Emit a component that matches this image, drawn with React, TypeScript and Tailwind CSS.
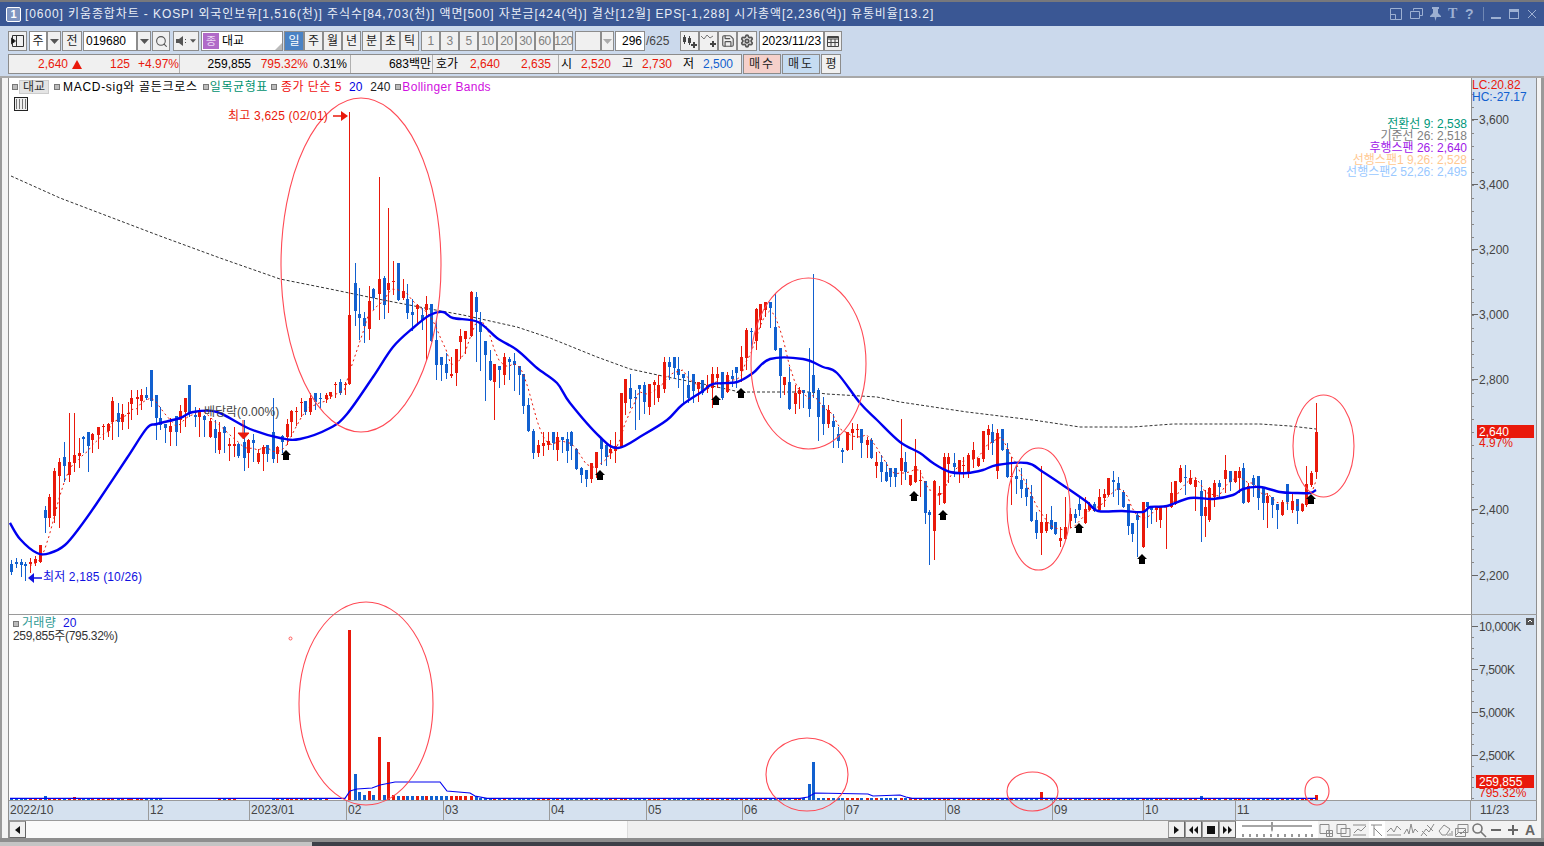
import React from 'react';
import { Search, Settings, Save } from 'lucide-react';

// x, wick top, body top, body bottom, wick bottom, 1 = up (red) / 0 = down (blue)
const candles: number[][] = [
  [11,560,564,572,575,0],[15.5,558,562,564,568,0],[20.5,559,562,565,577,0],[25,562,564,566,581,0],[30,558,562,564,573,1],[35,556,559,563,566,1],[40,545,545,562,563,1],
  [44.5,506,510,518,533,0],[49,494,497,518,527,1],[54,468,471,516,523,1],[59,458,462,476,528,1],[64,442,457,466,482,0],[68.5,413,462,475,482,1],[73.5,413,455,463,472,1],[78.5,438,453,456,468,1],
  [83,436,437,439,453,0],[88,432,432,446,472,0],[92,433,434,440,453,1],[98,427,427,435,449,1],[103,424,426,427,440,1],[108,423,424,431,437,1],[112,397,401,422,440,1],[117.5,403,413,422,437,0],
  [122,404,414,422,430,1],[127.5,402,413,414,429,1],[131,390,398,404,420,1],[136.5,390,397,399,415,1],[141,389,395,401,410,1],[146,387,395,398,400,0],[151,370,370,401,407,0],[156,395,395,418,440,0],
  [160,407,418,425,430,0],[165,424,424,428,443,0],[170,418,426,432,446,1],[175.5,416,416,432,446,0],[180,405,411,420,433,1],[185,398,398,412,427,1],[189,385,385,413,417,0],[194.5,407,415,417,427,0],
  [199,408,411,417,437,1],[204,415,416,420,437,0],[209.5,418,421,437,438,1],[214.5,420,429,438,453,0],[218.5,422,432,450,454,1],[223.5,426,427,433,453,0],[228.5,438,444,446,461,1],[233.5,427,444,446,457,1],
  [238,443,444,456,458,0],[243.5,420,442,458,471,0],[248,439,440,453,468,1],[252.5,434,440,443,462,0],[258,449,453,462,464,1],[262.5,445,447,454,471,1],[267,445,445,454,462,0],[272.5,398,432,459,463,0],
  [277,446,447,454,463,1],[282,435,436,442,453,0],[286.5,419,424,437,445,1],[291,410,411,422,437,1],[296,407,411,412,426,1],[301,398,402,403,417,1],[305,401,401,412,415,0],[310,393,398,412,415,1],
  [315,393,393,402,410,0],[320,393,398,399,408,0],[325.5,393,395,399,403,1],[330,392,392,396,399,1],[335,382,384,385,398,1],[340,379,382,393,395,0],[344.5,382,384,385,395,1],
  [349,112,315,384,385,1],[354.5,263,283,311,326,0],[359,288,314,318,340,0],[363.5,312,318,326,343,0],[368.5,286,301,329,340,1],[373,288,289,298,310,0],[378.5,177,279,294,320,1],[383.5,276,278,305,319,0],
  [388,208,283,290,313,1],[392.5,261,281,282,295,1],[397.5,263,263,300,301,0],[402.5,279,291,298,300,1],[407,284,299,313,319,0],[412,299,312,315,331,0],[417,304,305,309,324,1],[421.5,308,315,320,330,0],
  [426,296,304,310,361,1],[431,304,304,341,342,0],[436,320,340,365,380,0],[441,357,357,365,381,0],[446,353,364,373,379,0],[450.5,357,374,376,378,1],[455.5,349,349,373,386,1],[460,329,336,342,359,1],[465,331,331,339,354,1],
  [470.5,291,292,336,337,1],[475.5,292,297,312,362,0],[480,312,322,332,371,0],[485,341,341,355,401,0],[489.5,350,361,380,381,0],[494,364,364,382,420,1],[499,366,366,370,388,0],[504,353,357,375,385,1],[508.5,357,359,362,380,0],
  [513.5,353,361,365,391,0],[518.5,366,366,375,395,0],[523,374,374,406,414,0],[528,398,405,431,432,0],[533,429,431,453,459,0],[537.5,440,445,453,457,1],[542.5,432,443,446,456,1],[547.5,432,441,445,450,1],[552.5,432,432,443,450,0],
  [557,432,437,450,461,1],[561.5,437,437,440,453,0],[566.5,432,439,451,463,0],[571,431,432,446,460,0],[576,448,449,469,470,0],[581,467,468,475,483,0],[586,470,470,479,487,0],[591,463,463,479,483,1],[595.5,452,452,468,478,1],
  [600.5,439,439,449,465,0],[605.5,444,445,457,466,0],[610,440,449,453,459,1],[615,432,446,451,463,1],[620.5,393,393,447,448,1],[624.5,379,379,403,415,1],[629.5,374,388,399,408,0],[634.5,390,397,398,430,0],[639,385,385,389,420,0],
  [644,382,385,402,414,0],[649,384,384,407,415,1],[653.5,380,382,385,405,1],[658,375,385,398,402,1],[663.5,357,362,389,393,1],[668.5,357,362,367,380,0],[673.5,357,357,368,379,0],[678,357,369,375,388,0],[683,374,374,378,403,0],
  [687.5,371,385,398,403,0],[692.5,374,374,391,403,0],[697.5,382,382,389,402,1],[702,380,380,393,395,0],[707,375,385,389,393,1],[711.5,367,374,388,408,1],[716.5,367,374,378,388,1],[721.5,372,372,398,400,0],[726.5,372,375,392,393,1],
  [731.5,370,376,379,387,0],[736,367,367,373,388,0],[741,346,357,371,382,1],[745.5,328,330,358,370,1],[750.5,328,331,332,350,0],[755.5,308,309,341,350,1],[760,304,304,320,328,1],[765,302,302,310,317,1],[769.5,302,302,308,328,0],
  [774.5,294,327,350,351,0],[779.5,348,348,376,398,0],[784,377,377,385,395,1],[789,367,382,409,410,0],[794.5,385,393,404,414,1],[798.5,387,390,394,409,1],[803,390,390,393,408,0],[808.5,348,392,409,417,0],[813,274,375,392,398,0],
  [818,388,390,417,441,0],[823,397,405,424,435,0],[827.5,405,410,424,428,1],[832.5,414,421,427,448,0],[837.5,427,434,441,448,0],[842,448,450,452,463,0],[847,432,432,450,451,1],[852,423,429,433,450,1],[856.5,424,429,430,438,1],
  [861,429,429,443,458,0],[866.5,437,440,445,458,1],[871,438,440,458,459,0],[876,452,462,466,478,1],[881,455,462,472,482,0],[886,462,472,481,482,0],[890,468,468,477,487,0],[895,468,468,477,487,0],[900.5,419,458,471,485,1],
  [905,452,462,472,480,0],[910,475,475,485,486,1],[914.5,439,466,482,483,1],[919.5,470,480,481,497,1],[924.5,481,481,513,524,0],[929,510,512,515,565,0],[934,480,481,531,560,1],[939,486,493,495,505,1],[943.5,453,457,503,504,1],
  [948,453,457,464,483,1],[953.5,453,463,467,477,0],[958.5,460,460,473,483,1],[963,457,465,466,478,1],[968,453,455,473,478,1],[972.5,442,450,459,468,1],[977.5,458,458,466,467,1],[982.5,431,431,459,462,1],[987.5,425,429,435,450,1],
  [992,424,432,443,455,0],[997,429,433,471,479,1],[1001.5,429,429,450,451,0],[1006.5,443,449,477,478,0],[1011,457,476,477,505,1],[1016,465,476,479,494,0],[1021,468,480,489,498,0],[1026,479,488,497,506,0],[1030.5,485,496,521,522,0],
  [1035.5,512,520,533,539,0],[1040.5,466,522,533,555,1],[1045.5,514,522,531,533,1],[1050.5,506,520,529,530,0],[1055,522,522,534,535,0],[1059.5,527,538,541,547,1],[1064.5,497,527,539,540,1],[1069.5,508,514,521,528,1],[1074.5,509,514,518,523,0],
  [1079,498,504,510,516,0],[1084.5,497,509,523,524,1],[1088.5,502,504,510,511,1],[1093.5,502,504,511,512,0],[1098.5,489,497,510,511,1],[1103.5,489,494,498,507,1],[1108,478,478,495,496,1],[1113,471,480,482,497,0],[1117.5,477,483,490,505,0],
  [1122.5,490,492,507,508,0],[1127.5,504,504,526,535,0],[1132,523,523,534,542,0],[1137,512,515,520,557,0],[1142.5,502,502,547,548,1],[1146.5,502,502,507,528,0],[1151,507,507,510,524,0],[1155.5,507,507,510,522,1],[1160,507,507,520,528,1],
  [1166,505,505,507,549,1],[1171,482,493,507,508,1],[1175,481,481,504,505,1],[1179.5,465,468,482,483,1],[1184.5,465,477,478,495,0],[1190,470,478,484,485,1],[1195,478,480,487,511,1],[1200.5,480,491,516,542,0],[1205,490,507,516,537,1],
  [1209,487,488,520,522,1],[1214,480,483,497,507,1],[1219,480,483,487,498,0],[1224.5,455,470,479,493,1],[1229.5,471,471,482,491,0],[1234.5,471,471,482,483,1],[1239,467,471,478,493,1],[1243,463,468,503,504,0],[1248,483,486,502,503,1],
  [1253,475,478,485,497,0],[1258,476,476,498,510,0],[1263,488,488,503,520,0],[1267,493,496,503,528,1],[1272,497,497,505,518,0],[1277,504,504,510,529,0],[1282,500,502,515,516,1],[1287,484,484,502,510,0],[1292,493,501,510,513,1],
  [1297,499,499,511,524,0],[1302,504,504,511,512,1],[1306,466,484,505,507,1],[1311,471,473,485,487,1],[1316,403,432,472,479,1],
];

const ma20: number[][] = [[10,523],[20,539],[37,553],[50,553],[65,545],[80,527],[97,503],[127,458],[147,428],[157,424],[180,418],[193,412],[217,412],[250,429],[280,438],[300,439],[330,428],[347,414],[373,377],[393,347],[413,328],[430,315],[443,312],[453,318],[478,322],[497,338],[517,350],[537,368],[557,383],[570,403],[600,437],[618,448],[643,435],[667,420],[682,405],[703,391],[713,384],[737,382],[753,373],[770,359],[803,359],[823,367],[837,373],[860,403],[877,420],[900,442],[920,453],[933,463],[950,472],[967,473],[983,470],[997,465],[1027,463],[1043,472],[1067,488],[1087,502],[1098,511],[1122,511],[1143,512],[1150,507],[1167,506],[1190,498],[1213,499],[1233,495],[1243,489],[1260,487],[1280,492],[1295,493],[1310,493],[1316,490]];
const ma240: number[][] = [[11,176],[60,198],[110,217],[160,236],[220,258],[280,279],[330,289],[383,300],[430,309],[463,315],[517,327],[550,338],[597,357],[630,369],[667,377],[703,384],[740,392],[810,392],[827,394],[877,397],[900,402],[967,412],[1033,420],[1080,427],[1133,427],[1173,424],[1260,424],[1290,426],[1316,429]];
const volMa: number[][] = [[10,798.3],[345,798.3],[350,791],[357,789],[372,788],[380,785],[395,782],[440,782],[447,791],[470,793],[475,796],[487,798.3],[800,798.3],[808,797],[815,793],[868,794],[873,796],[900,795],[906,797],[912,798.3],[1316,798.3]];
const volTops: Record<number, number> = { 44.5:796,73.5:797,349:630,354.5:774,359:792,363.5:795,368.5:791,373:795,378.5:737,383.5:795,388:762,392.5:795,397.5:796,808.5:784,813:762,1040.5:792,1200.5:796,1316:795 };

const RED = '#e9190b';
const BLUE = '#1160cf';
const pts = (a: number[][]) => a.map((p) => p.join(',')).join(' ');

// moving averages in the picture run smooth, so go through the read-off points with a spline
const smooth = (a: number[][]) => {
  let d = `M${a[0][0]} ${a[0][1]}`;
  for (let i = 0; i < a.length - 1; i++) {
    const p0 = a[i - 1] ?? a[i];
    const p1 = a[i];
    const p2 = a[i + 1];
    const p3 = a[i + 2] ?? p2;
    const c1x = p1[0] + (p2[0] - p0[0]) / 6;
    const c1y = p1[1] + (p2[1] - p0[1]) / 6;
    const c2x = p2[0] - (p3[0] - p1[0]) / 6;
    const c2y = p2[1] - (p3[1] - p1[1]) / 6;
    d += `C${c1x} ${c1y} ${c2x} ${c2y} ${p2[0]} ${p2[1]}`;
  }
  return d;
};

const ma5 = candles.map((c, i) => {
  if (i < 4) return null;
  let s = 0;
  for (let k = i - 4; k <= i; k++) s += candles[k][5] ? candles[k][2] : candles[k][3];
  return [c[0], s / 5];
}).filter(Boolean) as number[][];

// stretches where only the average line shows under the volume bars
const noVolume = (x: number) => (x > 163 && x < 215) || (x > 236 && x < 270) || (x > 327 && x < 347);

const upArrows = [[286,450],[600,470],[716,395],[741,388],[914,491],[943,510],[1079,523],[1142,554],[1311,494]];
const priceTicks = [[3600,120],[3400,185],[3200,250],[3000,315],[2800,380],[2400,510],[2200,576]];
const volTicks = [['10,000K',627],['7,500K',670],['5,000K',713],['2,500K',756]] as [string, number][];

const Btn = ({ className = '', bg = 'bg-[#f0f0f0]', children }: { className?: string; bg?: string; children?: React.ReactNode }) => (
  <div className={`h-5 shrink-0 border border-[#8c8c8c] flex items-center justify-center text-[12px] text-[#222] ${bg} ${className}`}>{children}</div>
);
const Caret = ({ color = '#555' }: { color?: string }) => (
  <svg width="9" height="5" viewBox="0 0 9 5"><path d="M0 0h9L4.5 5z" fill={color} /></svg>
);
const Sq = ({ className = '' }: { className?: string }) => <span className={`inline-block w-[6px] h-[6px] border border-[#777] bg-[#bbb] shrink-0 ${className}`} />;

const periods = ['1','3','5','10','20','30','60','120'];
const timeCells = [
  ['2022/10','w-[140px]'],['12','w-[101px]'],['2023/01','w-[97px]'],['02','w-[97px]'],['03','w-[106px]'],['04','w-[97px]'],['05','w-[96px]'],['06','w-[102px]'],['07','w-[101px]'],['08','w-[107px]'],['09','w-[91px]'],['10','w-[92px]'],['11','w-[235px]'],
];

const ToolIcon = ({ d }: { d: string }) => (
  <svg width="16" height="16" viewBox="0 0 16 16" fill="none" stroke="#8b8b8b" strokeWidth="1" className="mr-px shrink-0"><path d={d} /></svg>
);

const App: React.FC = () => {
  return (
    <div className="w-[1544px] h-[846px] flex flex-col overflow-hidden bg-white text-[12px] [font-family:'Liberation_Sans','Noto_Sans_CJK_KR',sans-serif]">
      {/* title bar */}
      <div className="h-[26px] shrink-0 border-t-2 border-[#77787c] bg-[#3a5794] flex items-center pl-[6px] text-[#e8edf6]">
        <div className="w-[15px] h-[15px] rounded-[2px] border border-white bg-[#7f95c0] flex items-center justify-center text-[11px] font-bold text-white">1</div>
        <div className="ml-[4px] whitespace-pre text-[12px] tracking-[0.9px]">[0600] 키움종합차트 - KOSPI 외국인보유[1,516(천)] 주식수[84,703(천)] 액면[500] 자본금[424(억)] 결산[12월] EPS[-1,288] 시가총액[2,236(억)] 유통비율[13.2]</div>
        <div className="ml-auto flex items-center text-[#9db0d2]">
          <svg width="12" height="12" viewBox="0 0 12 12" fill="none" stroke="currentColor" className="mr-[8px]"><path d="M.5 .5h11v11H.5zM.5 6.500h5v5" /></svg>
          <svg width="13" height="12" viewBox="0 0 13 12" fill="none" stroke="currentColor" className="mr-[7px]"><path d="M3.500 2.500v-2h9v7h-3M.5 3.500h9v7h-9z" /></svg>
          <svg width="11" height="14" viewBox="0 0 11 14" fill="currentColor" className="mr-[7px]"><path d="M2 0h7v2H8v4l3 3v1H6.500L5.500 14l-1-4H0V9l3-3V2H2z" /></svg>
          <span className="w-[9px] mr-[8px] text-[14px] leading-none font-bold [font-family:'Liberation_Serif',serif]">T</span>
          <span className="w-[8px] mr-[10px] text-[14px] leading-none font-bold">?</span>
          <span className="w-px h-[14px] mr-[7px] bg-[#7088b4]" />
          <span className="w-[10px] h-[2px] mt-[8px] mr-[8px] bg-current" />
          <span className="w-[10px] h-[10px] mr-[9px] border border-current border-t-[3px]" />
          <svg width="8" height="8" viewBox="0 0 8 8" stroke="currentColor" className="mr-[8px]"><path d="M0 0l8 8M8 0L0 8" /></svg>
        </div>
      </div>

      {/* toolbars */}
      <div className="h-[52px] shrink-0 bg-[#cbd9ec] border-b-2 border-[#a8a8a8] pt-[5px] pl-2 flex flex-col gap-[3px]">
        <div className="flex items-center h-5">
          <Btn className="w-[19px]">
            <svg width="14" height="14" viewBox="0 0 14 14" fill="none" stroke="#333"><path d="M1.500 1.500h11v11h-11zM5.500 1.500v11" /><path d="M0.500 4l4 3-4 3z" fill="#111" /></svg>
          </Btn>
          <Btn bg="bg-white" className="w-[18px] ml-[2px]">주</Btn>
          <Btn className="w-[14px]"><Caret /></Btn>
          <Btn className="w-[20px] ml-px">전</Btn>
          <Btn bg="bg-white" className="w-[54px] ml-px justify-start pl-[2px] text-black">019680</Btn>
          <Btn className="w-[14px]"><Caret /></Btn>
          <Btn className="w-[18px] ml-px"><Search size={13} color="#555" strokeWidth={2} /></Btn>
          <Btn className="w-[26px] ml-[3px] gap-[2px]">
            <svg width="12" height="12" viewBox="0 0 12 12" fill="#555"><path d="M0 4h3l4-3v10L3 8H0zM9 4h1v1H9zM9 7h1v1H9z" /></svg>
            <svg width="6" height="4" viewBox="0 0 9 5"><path d="M0 0h9L4.500 5z" fill="#555" /></svg>
          </Btn>
          <Btn bg="bg-white" className="w-[82px] ml-[2px] justify-start pl-px relative">
            <span className="w-4 h-4 bg-[#b06ac8] text-[#ecd8f4] text-[11px] flex items-center justify-center">종</span>
            <span className="ml-[3px] text-black">대교</span>
            <span className="absolute right-0 bottom-0 w-0 h-0 border-l-[7px] border-l-transparent border-b-[7px] border-b-[#bbb]" />
          </Btn>
          <Btn bg="bg-[#4a82c4]" className="w-[20px] ml-px text-white!">일</Btn>
          <Btn className="w-[19px]">주</Btn>
          <Btn className="w-[19px]">월</Btn>
          <Btn className="w-[19px]">년</Btn>
          <Btn className="w-[19px] ml-px">분</Btn>
          <Btn className="w-[19px]">초</Btn>
          <Btn className="w-[19px]">틱</Btn>
          <div className="ml-[2px] flex">
            {periods.map((p) => (
              <Btn key={p} className="w-[19px] text-[#808080]! tracking-[-0.5px]">{p}</Btn>
            ))}
          </div>
          <Btn className="w-[26px] ml-[2px]" />
          <Btn className="w-[13px]"><Caret color="#aaa" /></Btn>
          <Btn bg="bg-white" className="w-[30px] ml-px justify-end pr-[2px] text-black">296</Btn>
          <span className="w-[35px] pl-px text-[#444]">/625</span>
          <Btn className="w-[19px]">
            <svg width="16" height="14" viewBox="0 0 16 14" fill="#444"><path d="M2 1h1v2h1v5H3v2H2V8H1V3h1zM7 2h1v2h1v5H8v2H7V9H6V4h1z" /><path d="M11 8h2v2h2v2h-2v2h-2v-2H9v-2h2z" /></svg>
          </Btn>
          <Btn className="w-[19px]">
            <svg width="16" height="14" viewBox="0 0 16 14" fill="none" stroke="#777"><path d="M0 2l3 3 3-4 3 3 3-2" /><path d="M11 7h2v2h2v2h-2v2h-2v-2H9V9h2z" fill="#444" stroke="none" /></svg>
          </Btn>
          <Btn className="w-[19px]"><Save size={14} color="#555" strokeWidth={2} /></Btn>
          <Btn className="w-[20px]"><Settings size={14} color="#555" strokeWidth={3} /></Btn>
          <Btn bg="bg-white" className="w-[65px] ml-[2px] text-black">2023/11/23</Btn>
          <Btn className="w-[18px]">
            <svg width="12" height="11" viewBox="0 0 12 11" fill="none" stroke="#444"><path d="M.5 .5h11v10H.5z" /><path d="M.5 1.500h11M.5 3h11" /><path d="M4 3v7M8 3v7M.5 6.500h11" /></svg>
          </Btn>
        </div>
        <div className="flex items-center h-5">
          <div className="w-[734px] h-5 border border-[#8c8c8c] bg-[#f0f0f0] flex items-center text-[#e9190b] whitespace-nowrap">
            <div className="w-[172px] flex items-center border-r border-[#b0b0b0] h-full -ml-px">
              <span className="w-[60px] text-right">2,640</span>
              <svg width="10" height="9" viewBox="0 0 10 9" className="ml-[4px]"><path d="M5 0l5 9H0z" fill="#e9190b" /></svg>
              <span className="w-[48px] text-right">125</span>
              <span className="w-[49px] text-right">+4.97%</span>
            </div>
            <div className="w-[171px] flex items-center border-r border-[#b0b0b0] h-full">
              <span className="w-[71px] text-right text-black">259,855</span>
              <span className="w-[57px] text-right">795.32%</span>
              <span className="w-[39px] text-right text-black">0.31%</span>
            </div>
            <div className="w-[82px] flex items-center border-r border-[#b0b0b0] h-full">
              <span className="w-[80px] text-right text-black">683백만</span>
            </div>
            <div className="w-[126px] flex items-center border-r border-[#b0b0b0] h-full">
              <span className="w-[24px] ml-[3px] text-black">호가</span>
              <span className="w-[40px] text-right">2,640</span>
              <span className="w-[51px] text-right">2,635</span>
            </div>
            <div className="flex items-center h-full">
              <span className="w-[10px] ml-[2px] text-black">시</span>
              <span className="w-[40px] text-right">2,520</span>
              <span className="w-[10px] ml-[11px] text-black">고</span>
              <span className="w-[40px] text-right">2,730</span>
              <span className="w-[10px] ml-[11px] text-black">저</span>
              <span className="w-[40px] text-right text-[#1160cf]">2,500</span>
            </div>
          </div>
          <Btn bg="bg-[#f5d0ca]" className="w-[38px] ml-px tracking-[2px]">매수</Btn>
          <Btn bg="bg-[#c5dcf2]" className="w-[38px] ml-px tracking-[2px]">매도</Btn>
          <Btn className="w-[20px] ml-px">평</Btn>
        </div>
      </div>

      {/* chart body */}
      <div className="h-[760px] shrink-0 flex bg-white">
        <div className="w-[2px] bg-[#9a9a9a]" />
        <div className="w-[6px] bg-[#f4f4f4]" />
        <div className="w-[1529px] flex flex-col border-l border-[#8f8f8f]">
          {/* price pane */}
          <div className="h-[537px] shrink-0 flex border-b border-[#9a9a9a]">
            <div className="relative w-[1462px] h-[536px]">
              <svg width="1462" height="536" viewBox="9 78 1462 536" className="block">
                <polyline points={pts(ma240)} fill="none" stroke="#333" strokeWidth="1" strokeDasharray="3 2" />
                {candles.map((c) => {
                  const x = Math.round(c[0]);
                  const col = c[5] ? RED : BLUE;
                  return (
                    <g key={c[0]} fill={col} shapeRendering="crispEdges">
                      <rect x={x} y={c[1]} width="1" height={c[4] - c[1]} />
                      <rect x={x - 1} y={c[2]} width="3" height={Math.max(c[3] - c[2], 1)} />
                    </g>
                  );
                })}
                <polyline points={pts(ma5)} fill="none" stroke={RED} strokeWidth="1" strokeDasharray="2 3" />
                <path d={smooth(ma20)} fill="none" stroke="#0000f0" strokeWidth="2.400" />
                <g fill="none" stroke="#ff4a55" strokeWidth="1.100">
                  <ellipse cx="361" cy="265" rx="80" ry="167" />
                  <ellipse cx="808.500" cy="363.500" rx="57.500" ry="85.500" />
                  <ellipse cx="1038.500" cy="509" rx="31.500" ry="61" />
                  <ellipse cx="1323.500" cy="446" rx="30.500" ry="51" />
                </g>
                {upArrows.map(([x, y]) => (
                  <path key={x} d={`M${x} ${y}l5 5h-2v5h-6v-5h-2z`} fill="#000" />
                ))}
                <path d="M243 420v13M238 433h11l-5.500 6z" fill={RED} stroke={RED} />
                <path d="M333 116h11" stroke={RED} strokeWidth="1.500" />
                <path d="M341 111l7 5-7 5z" fill={RED} />
                <path d="M28 578l6-5v10z" fill="#1010e0" />
                <path d="M33 578h9" stroke="#1010e0" strokeWidth="1.500" />
                <text x="228" y="120" fontSize="12" fill={RED} className="tracking-[0.2px]">최고 3,625 (02/01)</text>
                <text x="43" y="581" fontSize="12" fill="#1010e0" className="tracking-[0.15px]">최저 2,185 (10/26)</text>
                <text x="204" y="416" fontSize="12" fill="#444">배당락(0.00%)</text>
              </svg>
              {/* legend */}
              <div className="absolute left-[3px] top-[2px] h-[14px] flex items-center whitespace-nowrap">
                <Sq />
                <span className="ml-[1px] w-[30px] h-[14px] bg-[#e4e4e4] border border-[#ccc] flex items-center justify-center text-[#333] text-[12px] leading-none">대교</span>
                <Sq className="ml-[5px]" />
                <span className="ml-[3px] text-black tracking-[0.7px]">MACD-sig와 골든크로스</span>
                <Sq className="ml-[5px]" />
                <span className="ml-[1px] text-[#00916e] tracking-[0.6px]">일목균형표</span>
                <Sq className="ml-[3px]" />
                <span className="ml-[4px] text-[#f01010] tracking-[0.5px]">종가 단순 5</span>
                <span className="ml-[7px] text-[#0000e0]">20</span>
                <span className="ml-[8px] text-[#222]">240</span>
                <Sq className="ml-[5px]" />
                <span className="ml-[1px] text-[#d010e0] tracking-[0.3px]">Bollinger Bands</span>
              </div>
              <div className="absolute left-[5px] top-[19px] w-[14px] h-[14px] border border-[#222] bg-[#eee] p-px">
                <div className="w-full h-full bg-[repeating-linear-gradient(90deg,#777_0,#777_1px,transparent_1px,transparent_3px)]" />
              </div>
              <div className="absolute right-[4px] top-[40px] flex flex-col items-end leading-[12px] text-[12px]">
                <span className="text-[#00987a]">전환선 9: 2,538</span>
                <span className="text-[#808080]">기준선 26: 2,518</span>
                <span className="text-[#a020e8]">후행스팬 26: 2,640</span>
                <span className="text-[#ffc890]">선행스팬1 9,26: 2,528</span>
                <span className="text-[#99c8ff]">선행스팬2 52,26: 2,495</span>
              </div>
            </div>
            <div className="w-[66px] h-[536px] bg-[#d5e1ef] border-x border-[#8f8f8f] relative">
              <svg width="64" height="536" viewBox="1472 78 64 536" className="block">
                {Array.from({ length: 38 }, (_, i) => 94 + i * 13).map((y) => (
                  <rect key={y} x="1472" y={y} width="2" height="1" fill="#888" />
                ))}
                {priceTicks.map(([p, y]) => (
                  <g key={p}>
                    <rect x="1472" y={y - 1} width="6" height="1" fill="#666" />
                    <text x="1479" y={y + 4} fontSize="12" fill="#444">{p.toLocaleString('en-US')}</text>
                  </g>
                ))}
                <rect x="1477" y="425" width="57" height="13" fill={RED} />
                <text x="1479" y="436" fontSize="12" fill="#fff">2,640</text>
                <text x="1479" y="447" fontSize="12" fill={RED}>4.97%</text>
              </svg>
              <div className="absolute left-0 top-[1px] leading-[12px] text-[12px]">
                <div className="text-[#e9190b]">LC:20.82</div>
                <div className="text-[#1160cf]">HC:-27.17</div>
              </div>
            </div>
          </div>

          {/* volume pane */}
          <div className="h-[186px] shrink-0 flex border-b border-[#9a9a9a]">
            <div className="relative z-10 w-[1462px] h-[185px]">
              <svg width="1462" height="185" viewBox="9 615 1462 185" className="block overflow-visible">
                {candles.filter((c) => !noVolume(c[0])).map((c) => {
                  const x = Math.round(c[0]);
                  const top = volTops[c[0]] ?? (c[0] > 400 && c[0] < 480 ? 796 : 798);
                  return <rect key={c[0]} x={x - 1} y={top} width="3" height={800 - top} fill={c[5] ? RED : BLUE} shapeRendering="crispEdges" />;
                })}
                <polyline points={pts(volMa)} fill="none" stroke="#0000f0" strokeWidth="1.200" />
                <g fill="none" stroke="#ff4a55" strokeWidth="1.100">
                  <ellipse cx="366" cy="703.500" rx="67" ry="101.500" />
                  <ellipse cx="807" cy="774.500" rx="41" ry="36.500" />
                  <ellipse cx="1032.500" cy="791.500" rx="25.500" ry="19.500" />
                  <ellipse cx="1317" cy="791" rx="12" ry="14" />
                </g>
                <circle cx="290.500" cy="638.500" r="1.500" fill="none" stroke="#ff5a5a" />
              </svg>
              <div className="absolute left-[3px] top-[2px] leading-[13px] whitespace-nowrap">
                <div className="flex items-center">
                  <Sq className="ml-px" />
                  <span className="ml-[3px] text-[#2f9a94] tracking-[0.3px]">거래량</span>
                  <span className="ml-[7px] text-[#1010e0]">20</span>
                </div>
                <div className="ml-px text-[#333] tracking-[-0.3px]">259,855주(795.32%)</div>
              </div>
            </div>
            <div className="w-[66px] h-[185px] bg-[#d5e1ef] border-x border-[#8f8f8f] relative">
              <svg width="64" height="185" viewBox="1472 615 64 185" className="block">
                {Array.from({ length: 18 }, (_, i) => 626 + i * 10.750).map((y) => (
                  <rect key={y} x="1472" y={Math.round(y)} width="2" height="1" fill="#888" />
                ))}
                {volTicks.map(([t, y]) => (
                  <g key={t}>
                    <rect x="1472" y={y - 1} width="6" height="1" fill="#666" />
                    <text x="1479" y={y + 4} fontSize="12" fill="#444" className="tracking-[-0.4px]">{t}</text>
                  </g>
                ))}
                <rect x="1476" y="775" width="58" height="13" fill={RED} />
                <text x="1479" y="786" fontSize="12" fill="#fff">259,855</text>
                <text x="1479" y="797" fontSize="12" fill={RED}>795.32%</text>
                <rect x="1526" y="618" width="8" height="7" fill="#555" />
                <path d="M1528 622l2-2 2 2" stroke="#fff" fill="none" />
              </svg>
            </div>
          </div>

          {/* time axis */}
          <div className="h-[20px] shrink-0 flex bg-[#d5e1ef] border-b border-[#9a9a9a] text-[#444] leading-[19px]">
            {timeCells.map(([t, w], i) => (
              <div key={i} className={`${w} shrink-0 pl-px border-r border-[#9a9a9a]`}>{t}</div>
            ))}
            <div className="w-[66px] pl-[9px] border-r border-[#8f8f8f]">11/23</div>
          </div>

          {/* scroll row */}
          <div className="h-[17px] shrink-0 flex items-center bg-[#f5f5f5]">
            <div className="w-[17px] h-[17px] shrink-0 border border-[#999] border-b-[#666] border-r-[#666] bg-[#f0f0f0] flex items-center justify-center">
              <svg width="6" height="8" viewBox="0 0 6 8"><path d="M5 0v8L0 4z" fill="#111" /></svg>
            </div>
            <div className="w-[601px] h-full shrink-0 bg-[#fafafa]" />
            <div className="w-[541px] h-full shrink-0 bg-[#efefef] border-l border-[#dcdcdc]" />
            {['M2 0v8l5-4z','M4 0v8L0 4zM9 0v8L5 4z','M1 0h8v8H1z','M0 0v8l4-4zM5 0v8l4-4z'].map((d) => (
              <div key={d} className="w-[17px] h-[17px] shrink-0 border border-[#999] border-b-[#666] border-r-[#666] bg-[#f0f0f0] flex items-center justify-center">
                <svg width="10" height="8" viewBox="0 0 10 8"><path d={d} fill="#111" /></svg>
              </div>
            ))}
            <div className="w-[82px] h-full shrink-0 bg-white">
              <svg width="82" height="17" viewBox="0 0 82 17">
                <path d="M6 5h70" stroke="#888" strokeWidth="1.500" />
                <path d="M35 1h2v8l-1 2-1-2z" fill="#999" />
                <path d="M7 13v3M14 13v3M21 13v3M28 13v3M35 13v3M42 13v3M49 13v3M56 13v3M63 13v3M70 13v3M76 13v3" stroke="#333" />
              </svg>
            </div>
            <div className="flex-1 h-full flex items-center bg-[#f3f3f3] overflow-hidden">
              <ToolIcon d="M2 2.500h9v9h-9zM8.500 8.500h6v6h-6zM11.500 8.500v6M8.500 11.500h6" />
              <ToolIcon d="M2 2.500h9v9h-9zM6 6.500h9v8H6z" />
              <ToolIcon d="M1 3h13M1 13h13M2 11l4-4 3 2 5-5" />
              <div className="w-4 h-[17px] mr-px shrink-0 bg-white flex items-center justify-center">
                <svg width="16" height="16" viewBox="0 0 16 16" fill="none" stroke="#8b8b8b"><path d="M2 3h11M5 3v11M5 6l8 8" /></svg>
              </div>
              <ToolIcon d="M1 10l4-4 3 4 3-6 4 4M1 13h14" />
              <ToolIcon d="M1 12l3-5 2 5 2-10 2 9 2-4 3 3" />
              <ToolIcon d="M1 14l5-7 3 3 5-8M2 9l5 5M7 3l6 6" />
              <ToolIcon d="M2 9l5-6 6 4-4 6H5zM11 14v-2M13 14v-3M15 14V9" />
              <ToolIcon d="M4 2.500h10v8H4zM1.500 6.500h10v8h-10zM2 13l3-3 2 2 4-4" />
              <svg width="16" height="16" viewBox="0 0 16 16" fill="none" stroke="#777" strokeWidth="1.600" className="mr-px shrink-0"><circle cx="6.500" cy="6.500" r="4.500" /><path d="M10 10l5 5" /></svg>
              <svg width="16" height="16" viewBox="0 0 16 16" stroke="#666" strokeWidth="2" className="mr-px shrink-0"><path d="M3 8h10" /></svg>
              <svg width="16" height="16" viewBox="0 0 16 16" stroke="#666" strokeWidth="2" className="mr-px shrink-0"><path d="M3 8h10M8 3v10" /></svg>
              <span className="w-4 shrink-0 text-center text-[14px] font-bold leading-none text-[#666]">A</span>
            </div>
          </div>
        </div>
        <div className="w-[4px] bg-[#f4f4f4]" />
        <div className="w-[3px] bg-[#9a9a9a]" />
      </div>

      {/* window bottom edge */}
      <div className="h-[4px] shrink-0 bg-[#8e8e8e]" />
      <div className="h-[4px] shrink-0 flex">
        <div className="w-[312px] bg-[#c4c4c4]" />
        <div className="flex-1 bg-[#3d4048]" />
      </div>
    </div>
  );
};

export default App;
